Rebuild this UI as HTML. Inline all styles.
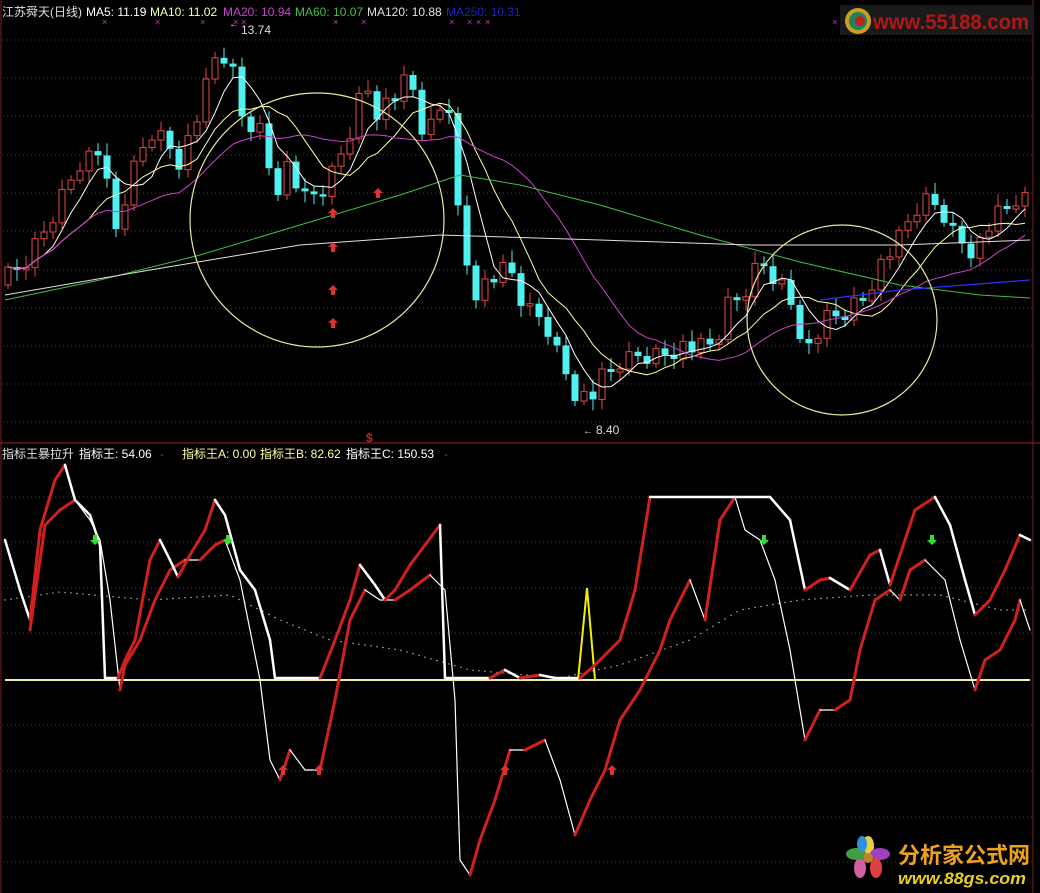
<!DOCTYPE html>
<html><head><meta charset="utf-8"><style>
html,body{margin:0;padding:0;background:#000;width:1040px;height:893px;overflow:hidden}
svg{display:block}
text{font-family:"Liberation Sans","Noto Sans CJK SC",sans-serif}
</style></head><body>
<svg id="s" width="1040" height="893" viewBox="0 0 1040 893" xmlns="http://www.w3.org/2000/svg" font-size="12">
<rect width="1040" height="893" fill="#000"/>
<g id="grid" stroke="#8a2020" stroke-dasharray="1,3" stroke-width="1"></g>
<line x1="0" y1="443" x2="1040" y2="443" stroke="#a02020" stroke-width="1"/>
<line x1="1033" y1="0" x2="1033" y2="893" stroke="#802020" stroke-width="1"/>
<line x1="1" y1="0" x2="1" y2="893" stroke="#802020" stroke-width="1"/>
<g id="cand"></g>
<g id="ma" fill="none"></g>
<circle cx="317" cy="220" r="127" fill="none" stroke="#e8e8a0" stroke-width="1.2"/>
<circle cx="842" cy="320" r="95" fill="none" stroke="#e8e8a0" stroke-width="1.2"/>
<g id="low" fill="none"></g>
<g id="arr"></g>
<text x="2" y="16" fill="#e0e0e0">江苏舜天(日线)</text>
<text x="86" y="16" fill="#fff">MA5: 11.19</text>
<text x="150" y="16" fill="#ffffa0">MA10: 11.02</text>
<text x="223" y="16" fill="#d040d0">MA20: 10.94</text>
<text x="295" y="16" fill="#40c040">MA60: 10.07</text>
<text x="367" y="16" fill="#e0e0e0">MA120: 10.88</text>
<text x="446" y="16" fill="#2020c0">MA250: 10.31</text>
<text x="241" y="34" fill="#ddd">13.74</text>
<text x="229" y="27" fill="#ddd" font-size="10">←</text>
<text x="596" y="434" fill="#ddd">8.40</text>
<text x="583" y="434" fill="#ddd" font-size="10">←</text>
<text x="366" y="442" fill="#d02020" font-weight="bold">$</text>
<text x="2" y="458" fill="#e0e0e0">指标王暴拉升</text>
<text x="79" y="458" fill="#fff">指标王: 54.06</text>
<text x="160" y="458" fill="#555">-</text>
<text x="182" y="458" fill="#ffffa0">指标王A: 0.00</text>
<text x="260" y="458" fill="#ffffa0">指标王B: 82.62</text>
<text x="346" y="458" fill="#fff">指标王C: 150.53</text>
<text x="444" y="458" fill="#555">-</text>
<g id="xs" fill="#c040c0" font-size="9"></g>
<rect x="840" y="5" width="193" height="30" fill="#1a1a1a"/>
<circle cx="858" cy="21" r="13" fill="#c8a020"/>
<circle cx="858" cy="21" r="9" fill="#208060"/>
<circle cx="860" cy="21" r="5" fill="#c02020"/>
<text x="873" y="29" fill="#b01818" font-size="21" font-weight="bold" textLength="156" lengthAdjust="spacingAndGlyphs">www.55188.com</text>
<g transform="translate(868,858)">
<ellipse cx="0" cy="-12" rx="6" ry="10" fill="#e8d040"/>
<ellipse cx="12" cy="-4" rx="10" ry="6" fill="#a040c0"/>
<ellipse cx="8" cy="10" rx="6" ry="10" fill="#e04040"/>
<ellipse cx="-8" cy="10" rx="6" ry="10" fill="#d060a0"/>
<ellipse cx="-12" cy="-4" rx="10" ry="6" fill="#40a040"/>
<ellipse cx="-6" cy="-14" rx="5" ry="8" fill="#3090e0"/>
<circle r="5" fill="#c08030"/>
</g>
<text x="898" y="863" fill="#f0a020" font-size="22" font-weight="bold" textLength="132" lengthAdjust="spacingAndGlyphs">分析家公式网</text>
<text x="898" y="884" fill="#e8d020" font-size="17" font-weight="bold" font-style="italic" textLength="128" lengthAdjust="spacingAndGlyphs">www.88gs.com</text>
</svg>
<script>
var NS="http://www.w3.org/2000/svg",S=document.getElementById('s');
function el(p,t,a){var e=document.createElementNS(NS,t);for(var k in a)e.setAttribute(k,a[k]);document.getElementById(p).appendChild(e);return e}
[40,78,116,155,193,231,270,308,346,384,422,497,542,588,633,725,771,817,862].forEach(function(y){el('grid','line',{x1:3,y1:y,x2:1032,y2:y})});
function interp(pts,x){for(var i=1;i<pts.length;i++){if(x<=pts[i][0]){var a=pts[i-1],b=pts[i];return a[1]+(b[1]-a[1])*(x-a[0])/(b[0]-a[0])}}return pts[pts.length-1][1]}
var P=[[5,280],[20,270],[40,240],[60,200],[80,160],[100,150],[115,235],[130,180],[150,130],[165,140],[180,160],[200,110],[215,60],[230,55],[240,115],[260,130],[275,190],[290,160],[300,200],[320,195],[335,170],[350,130],[365,80],[375,110],[390,100],[410,80],[425,140],[440,110],[450,100],[460,240],[475,290],[490,280],[510,270],[525,310],[545,320],[560,360],[575,390],[590,400],[605,375],[620,365],[640,355],[660,355],[680,345],[700,350],[715,345],[730,300],[745,290],[760,260],[775,275],[790,295],[800,350],[810,345],[825,320],[840,315],[860,300],[880,265],[900,240],[915,210],[930,200],[945,215],[960,240],[975,250],[990,225],[1010,205],[1030,200]];
var prev=285,cl=[];
for(var i=0;i<114;i++){var x=8+i*9;var c=interp(P,x)+((i*37)%11-5)*2.2;var o=prev;if(Math.abs(c-o)<2)c=o+3*((i%2)?1:-1);
var hi=Math.min(o,c)-4-(i*13%9),lo=Math.max(o,c)+4+(i*7%8);
var up=c<o;var col=up?'#e04848':'#50f0f0';
el('cand','line',{x1:x,y1:hi,x2:x,y2:lo,stroke:col,'stroke-width':1});
if(up)el('cand','rect',{x:x-3,y:c,width:6,height:o-c,fill:'#000',stroke:col,'stroke-width':1});
else el('cand','rect',{x:x-3.5,y:o,width:7,height:c-o,fill:col});
prev=c;cl.push([x,c]);}
function ma(n,col,w){var d='';for(var i=0;i<cl.length;i++){var s=0,k=0;for(var j=Math.max(0,i-n+1);j<=i;j++){s+=cl[j][1];k++}d+=(i?'L':'M')+cl[i][0]+','+(s/k).toFixed(1)}el('ma','path',{d:d,stroke:col,'stroke-width':w||1})}
ma(5,'#ffffff');ma(10,'#ffffa0');ma(20,'#d040d0');
function pl(g,pts,col,w){el(g,'polyline',{points:pts.map(function(p){return p.join(',')}).join(' '),stroke:col,'stroke-width':w,fill:'none'})}
pl('ma',[[5,300],[100,280],[200,255],[300,225],[400,195],[460,175],[520,185],[600,205],[700,235],[800,262],[900,285],[980,295],[1030,298]],'#40c040',1);
pl('ma',[[5,295],[150,270],[300,245],[440,235],[600,240],[750,245],[900,245],[1030,240]],'#e0e0e0',1);
pl('ma',[[820,300],[900,290],[1030,280]],'#3030ff',1.2);
el('low','line',{x1:5,y1:680,x2:1030,y2:680,stroke:'#f0f0a0','stroke-width':2});
pl('low',[[578,680],[587,588],[595,680]],'#f0f000',2);
var D=[[5,600],[60,592],[150,600],[230,595],[280,620],[330,640],[400,650],[470,670],[560,678],[620,665],[690,640],[740,610],[800,600],[870,595],[940,595],[1000,610]];
for(var x=5;x<1030;x+=6){el('low','circle',{cx:x,cy:interp(D,x),r:0.7,fill:'#ccc'})}
function seg(pts,w,wc){for(var i=1;i<pts.length;i++){var a=pts[i-1],b=pts[i];var up=b[1]<a[1]-1;
el('low','line',{x1:a[0],y1:a[1],x2:b[0],y2:b[1],stroke:up?'#d02020':'#fff','stroke-width':up?3:wc,'stroke-linecap':'round'})}}
var A=[[5,540],[20,590],[30,620],[40,530],[55,480],[65,465],[75,500],[90,515],[100,545],[105,678],[118,678],[125,660],[135,640],[150,560],[160,540],[170,560],[178,577],[190,555],[205,530],[215,500],[225,515],[240,570],[255,590],[270,640],[275,678],[320,678],[335,640],[350,600],[360,565],[375,585],[385,600],[395,590],[410,565],[425,545],[440,525],[445,678],[490,678],[505,670],[520,678],[540,675],[555,678],[580,678],[595,665],[620,640],[635,590],[650,497],[770,497],[790,520],[805,590],[820,580],[830,578],[850,590],[870,555],[880,550],[890,585],[905,540],[915,510],[935,497],[950,525],[965,580],[975,615],[990,600],[1005,570],[1020,535],[1030,540]];
var B=[[30,630],[45,525],[60,510],[75,500],[90,520],[100,540],[110,600],[120,690],[125,665],[140,640],[155,600],[170,570],[185,560],[200,560],[215,545],[225,540],[240,580],[260,680],[270,760],[280,780],[290,750],[305,770],[320,770],[335,700],[350,620],[365,590],[380,600],[395,600],[410,590],[430,575],[445,590],[455,700],[460,860],[470,875],[480,840],[495,800],[510,750],[525,750],[545,740],[560,780],[575,835],[590,800],[605,770],[620,720],[640,690],[660,650],[670,620],[690,580],[705,620],[720,520],[735,497],[745,530],[760,540],[775,580],[790,650],[805,740],[820,710],[835,710],[850,700],[860,650],[875,600],[890,590],[900,600],[910,570],[925,560],[945,580],[960,640],[975,690],[985,660],[1000,650],[1015,620],[1020,600],[1030,630]];
seg(B,3,1.2);seg(A,3,2.5);
function arrow(x,y,col,down){var s=down?-1:1;el('arr','path',{d:'M'+x+','+(y-5*s)+' L'+(x+5)+','+y+' L'+(x+2)+','+y+' L'+(x+2)+','+(y+5*s)+' L'+(x-2)+','+(y+5*s)+' L'+(x-2)+','+y+' L'+(x-5)+','+y+' Z',fill:col})}
[[333,213],[333,247],[333,290],[333,323],[378,193],[283,770],[319,770],[505,770],[612,770]].forEach(function(p){arrow(p[0],p[1],'#e03030')});
[[95,540],[228,540],[764,540],[932,540]].forEach(function(p){arrow(p[0],p[1],'#30e030',true)});
[105,158,203,236,244,336,364,452,470,479,488,835,1030].forEach(function(x){var t=el('xs','text',{x:x-3,y:25,fill:'#c040c0'});t.textContent='×'});
</script>
</body></html>
